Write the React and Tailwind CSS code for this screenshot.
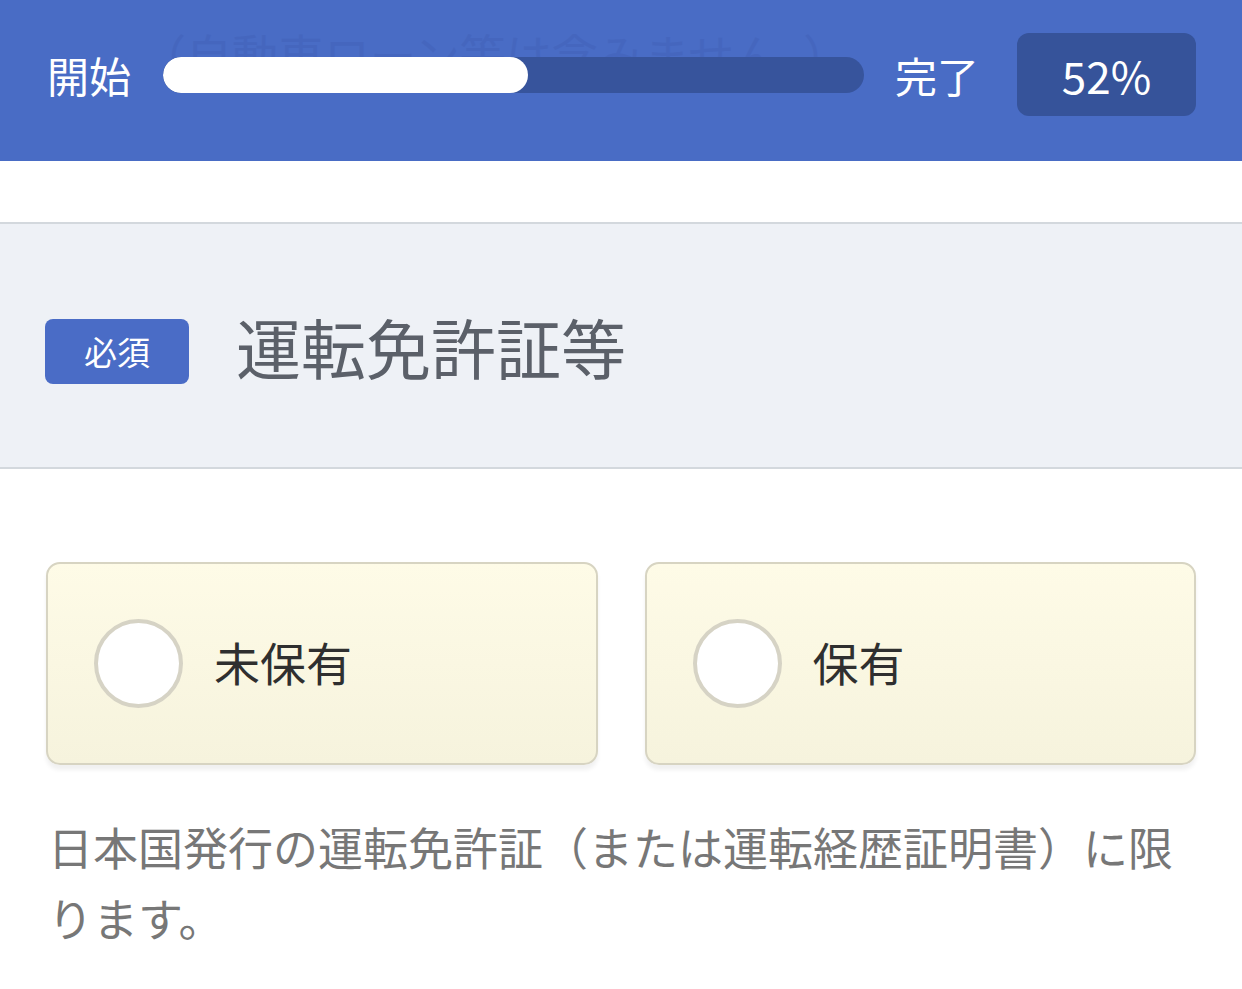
export default function App() {
  const font = { fontFamily: '"Noto Sans CJK JP", "Noto Sans", sans-serif' };
  return (
    <div className="w-[1242px] h-[989px] bg-white overflow-hidden" style={font}>
      <header className="relative h-[161px] bg-[#496cc5] flex items-center pl-[47px] pr-[46px] pb-[12px]">
        <div className="absolute left-[140px] top-[30px] text-[46px] leading-[46px] text-[#4262b8] opacity-50 whitespace-nowrap">
          （自動車ローン等は含みません。）
        </div>
        <span className="relative text-white text-[42px] leading-none">開始</span>
        <div className="relative ml-[32px] w-[701px] h-[36px] rounded-full bg-[#37549c] overflow-hidden">
          <div className="h-full rounded-full bg-white" style={{ width: "52%" }} />
        </div>
        <span className="relative ml-[31px] text-white text-[42px] leading-none">完了</span>
        <div className="relative ml-auto w-[179px] h-[83px] rounded-[12px] bg-[#36539a] flex items-center justify-center text-white text-[44px] leading-none">
          52%
        </div>
      </header>
      <div className="h-[61px]" />
      <section className="h-[247px] bg-[#eef1f6] border-t-2 border-b-2 border-[#d3d8dd] flex items-center pl-[45px] pt-[12px]">
        <span className="w-[144px] h-[65px] rounded-[8px] bg-[#4a6cc6] text-white text-[33px] leading-none flex items-center justify-center">
          必須
        </span>
        <h1 className="ml-[47px] -mt-[10px] text-[65px] leading-none text-[#5b6069]">運転免許証等</h1>
      </section>
      <div className="px-[46px] pt-[93px] grid grid-cols-2 gap-[47px]">
        {["未保有", "保有"].map((t) => (
          <label
            key={t}
            className="h-[203px] rounded-[14px] border-2 border-[#d7d4c2] bg-gradient-to-b from-[#fefbe7] to-[#f6f3dd] shadow-[0_5px_4px_rgba(0,0,0,0.06)] flex items-center pl-[46px]"
          >
            <span className="w-[89px] h-[89px] rounded-full bg-white border-[4px] border-[#d6d3c5]" />
            <span className="ml-[31px] -mt-[6px] text-[46px] leading-none text-[#2f2f2f]">{t}</span>
          </label>
        ))}
      </div>
      <p className="mt-[46px] pl-[48px] pr-[60px] text-[45px] leading-[71px] text-[#777777]">
        日本国発行の運転免許証（または運転経歴証明書）に限ります。
      </p>
    </div>
  );
}
